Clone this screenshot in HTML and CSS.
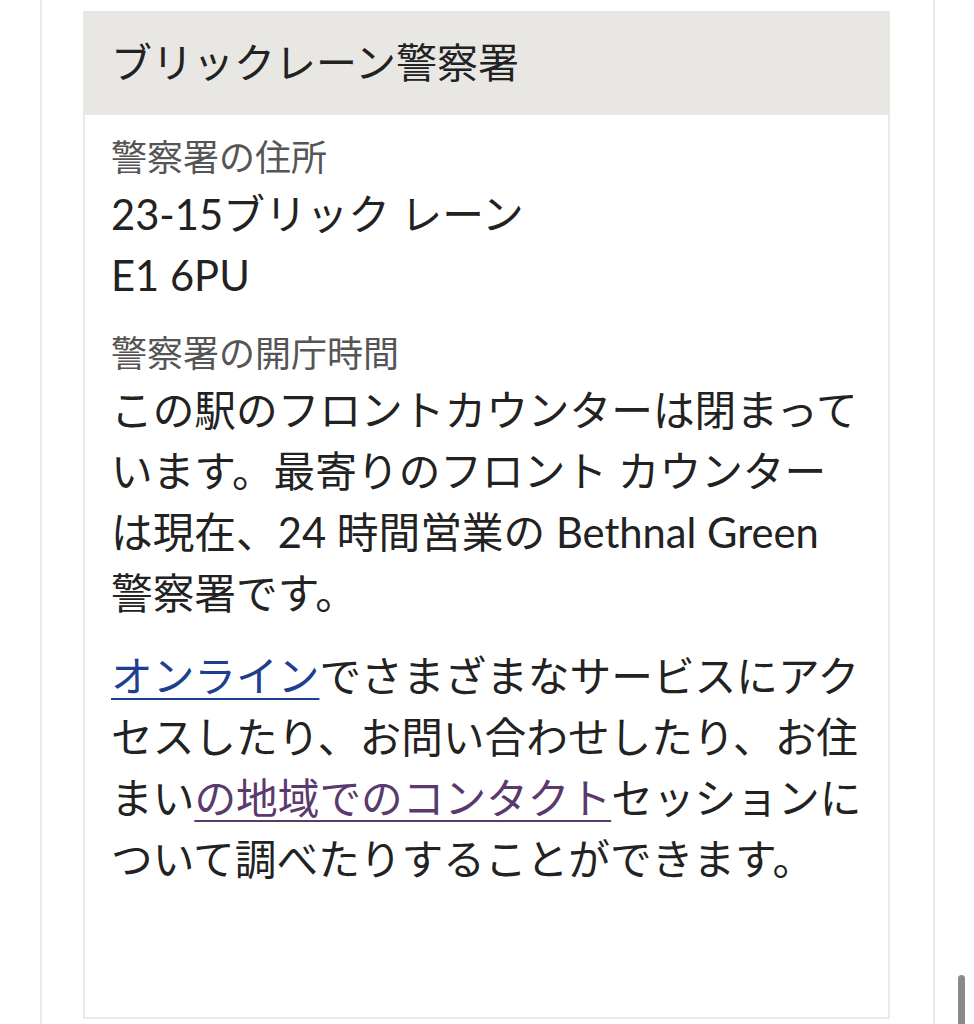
FILE: index.html
```html
<html>
<head>
  <title>ブリックレーン警察署</title>
  <link rel="stylesheet" href="styles.css">
</head>
<body>
  <div class="page">
    <div class="station">
      <h2 class="station-title">ブリックレーン警察署</h2>

      <div class="station-body">
        <div class="label">警察署の住所</div>
        <div class="value">23-15ブリック レーン<br>E1 6PU</div>

        <div class="label label-gap">警察署の開庁時間</div>
        <p class="value">この駅のフロントカウンターは閉まっています。最寄りのフロント カウンターは現在、24 時間営業の Bethnal Green 警察署です。</p>

        <p class="value note"><a href="#" class="link">オンライン</a>でさまざまなサービスにアクセスしたり、お問い合わせしたり、お住まい<a href="#" class="link visited">の地域でのコンタクト</a>セッションについて調べたりすることができます。</p>
      </div>
    </div>
  </div>

  <div class="scroll-thumb"></div>
</body>
</html>
```

FILE: styles.css
```css
body {
  margin: 0;
  background-color: #fff;
  font-family: Lato, "Noto Sans CJK JP", sans-serif;
  color: #222;
  overflow: hidden;
}

.page {
  margin: 0 39px 0 40px;
  border-left: 2px solid #e9e9e7;
  border-right: 2px solid #e9e9e7;
  padding: 11px 43px 0 41px;
  height: 1024px;
  box-sizing: border-box;
}

.station {
  border: 2px solid #e9e9e7;
  border-top: none;
  height: 1008px;
  box-sizing: border-box;
}

.station-title {
  margin: 0 -2px;
  background-color: #e8e7e3;
  height: 104px;
  padding: 0 28px;
  font-size: 41px;
  font-weight: normal;
  line-height: 104px;
}

.station-body {
  padding: 15px 22px 0 26px;
}

.label {
  font-size: 36px;
  line-height: 54px;
  color: #555;
}

.label-gap {
  margin-top: 20px;
}

.value {
  font-size: 41.7px;
  line-height: 61px;
  margin: 0;
}

.note {
  margin-top: 22px;
}

.link {
  color: #1d3f8f;
  text-decoration: underline;
  text-decoration-thickness: 2px;
  text-underline-offset: 6px;
}

.visited {
  color: #5a3a6c;
}

.scroll-thumb {
  position: fixed;
  left: 958px;
  top: 975px;
  width: 7px;
  height: 70px;
  border-radius: 4px;
  background-color: #8a8a8a;
}
```
